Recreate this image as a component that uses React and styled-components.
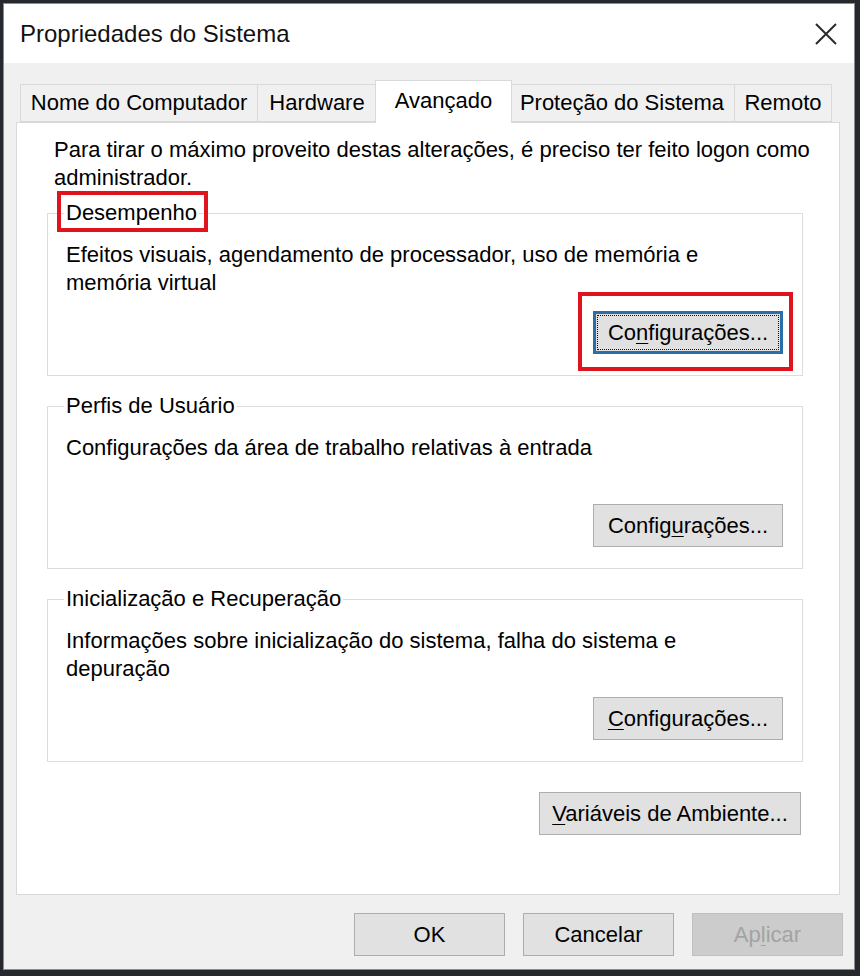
import React from 'react';
import styled, { createGlobalStyle } from 'styled-components';

const GlobalStyle = createGlobalStyle`
  html, body {
    margin: 0;
    padding: 0;
    background: #25282c;
  }
  body {
    font-family: 'Liberation Sans', Arial, sans-serif;
    color: #000;
  }
  #root {
    padding: 3px 5px 6px 3px;
  }
`;

const Window = styled.div`
  width: 852px;
  height: 967px;
  box-sizing: border-box;
  border: 1px solid #8c8c8c;
  background: #f0f0f0;
  display: flex;
  flex-direction: column;
`;

const TitleBar = styled.header`
  height: 59px;
  flex-shrink: 0;
  background: #fff;
  display: flex;
  align-items: center;
  justify-content: space-between;
  padding: 0 17px 0 16px;
`;

const Title = styled.h1`
  margin: 0;
  font-size: 24px;
  font-weight: normal;
  color: #111;
`;

const CloseButton = styled.button`
  border: 0;
  background: none;
  padding: 0;
  width: 22px;
  height: 22px;
  display: flex;
  cursor: pointer;
`;

const Body = styled.div`
  flex: 1;
  display: flex;
  flex-direction: column;
  padding: 17px 14px 13px 12px;
  min-height: 0;
`;

const TabStrip = styled.div`
  height: 42px;
  flex-shrink: 0;
  display: flex;
  align-items: flex-end;
  padding-left: 4px;
`;

const Tab = styled.div`
  box-sizing: border-box;
  width: ${p => p.$w}px;
  height: ${p => (p.$active ? 43 : 38)}px;
  margin: ${p => (p.$active ? '0 -2px -1px -2px' : '0 0 0 -1px')};
  padding-bottom: ${p => (p.$active ? 3 : 0)}px;
  border: 1px solid #d9d9d9;
  border-bottom: ${p => (p.$active ? '0' : '1px solid #d9d9d9')};
  background: ${p => (p.$active ? '#fff' : '#f0f0f0')};
  position: relative;
  z-index: ${p => (p.$active ? 2 : 1)};
  display: flex;
  align-items: center;
  justify-content: center;
  font-size: 22px;
  white-space: nowrap;

  &:first-child {
    margin-left: 0;
  }
`;

const Panel = styled.section`
  flex: 1;
  background: #fff;
  border: 1px solid #d9d9d9;
  padding: 13px 36px 0 30px;
  display: flex;
  flex-direction: column;
`;

const Intro = styled.p`
  margin: 0 0 7px 7px;
  font-size: 22px;
  line-height: 28px;
  white-space: nowrap;
`;

const Groups = styled.div`
  display: flex;
  flex-direction: column;
  gap: 16px;
`;

const Group = styled.fieldset`
  margin: 0;
  padding: 0;
  border: 1px solid #dcdcdc;
  min-width: 0;
`;

const Legend = styled.legend`
  margin-left: 16px;
  padding: 0 2px;
  font-size: 22px;
  line-height: 28px;
`;

const GroupBody = styled.div`
  box-sizing: border-box;
  height: 148px;
  display: flex;
  flex-direction: column;
  padding: 14px 19px 21px 18px;
`;

const Description = styled.p`
  margin: 0;
  font-size: 22px;
  line-height: 28px;
  white-space: nowrap;
`;

const Button = styled.button`
  box-sizing: border-box;
  width: ${p => p.$w || 151}px;
  height: 43px;
  padding: 0;
  font-family: 'Liberation Sans', Arial, sans-serif;
  font-size: 22px;
  color: ${p => (p.disabled ? '#a3a3a3' : '#000')};
  background: ${p => (p.disabled ? '#cccccc' : '#e1e1e1')};
  border: ${p => (p.$focused ? '3px solid #2a6eaa' : `1px solid ${p.disabled ? '#bfbfbf' : '#adadad'}`)};
  outline: ${p => (p.$focused ? '1px dotted #111' : 'none')};
  outline-offset: -5px;
  cursor: default;

  u {
    text-decoration-thickness: 1px;
    text-underline-offset: 3px;
  }
`;

const GroupButton = styled(Button)`
  margin-top: auto;
  align-self: flex-end;
`;

const EnvButton = styled(Button)`
  margin: 30px 2px 0 0;
  align-self: flex-end;
`;

const Marked = styled.span`
  position: relative;
  display: inline-block;
  align-self: ${p => p.$align || 'auto'};
  margin-top: ${p => (p.$push ? 'auto' : '0')};

  &::after {
    content: '';
    position: absolute;
    top: ${p => p.$t}px;
    right: ${p => p.$r}px;
    bottom: ${p => p.$b}px;
    left: ${p => p.$l}px;
    border: 4px solid #e0141c;
    pointer-events: none;
  }
`;

const Footer = styled.div`
  display: flex;
  justify-content: flex-end;
  gap: 18px;
  margin: 18px -3px 0 0;
`;

const CloseIcon = () => (
  <svg width="22" height="22" viewBox="0 0 22 22">
    <path d="M1 1 L21 21 M21 1 L1 21" stroke="#2b2b2b" strokeWidth="2" fill="none" />
  </svg>
);

const tabs = [
  { label: 'Nome do Computador', w: 238 },
  { label: 'Hardware', w: 120 },
  { label: 'Avançado', w: 137, active: true },
  { label: 'Proteção do Sistema', w: 226 },
  { label: 'Remoto', w: 98 },
];

export default function App() {
  return (
    <>
      <GlobalStyle />
      <Window>
        <TitleBar>
          <Title>Propriedades do Sistema</Title>
          <CloseButton aria-label="Fechar">
            <CloseIcon />
          </CloseButton>
        </TitleBar>

        <Body>
          <TabStrip>
            {tabs.map(t => (
              <Tab key={t.label} $w={t.w} $active={t.active}>
                {t.label}
              </Tab>
            ))}
          </TabStrip>

          <Panel>
            <Intro>
              Para tirar o máximo proveito destas alterações, é preciso ter feito logon como
              <br />
              administrador.
            </Intro>

            <Groups>
              <Group>
                <Legend>
                  <Marked $t={-8} $r={-11} $b={-5} $l={-9}>Desempenho</Marked>
                </Legend>
                <GroupBody>
                  <Description>
                    Efeitos visuais, agendamento de processador, uso de memória e
                    <br />
                    memória virtual
                  </Description>
                  <Marked $align="flex-end" $push $t={-19} $r={-10} $b={-17} $l={-15}>
                    <Button $w={190} $focused>
                      Co<u>n</u>figurações...
                    </Button>
                  </Marked>
                </GroupBody>
              </Group>

              <Group>
                <Legend>Perfis de Usuário</Legend>
                <GroupBody>
                  <Description>Configurações da área de trabalho relativas à entrada</Description>
                  <GroupButton $w={190}>
                    Config<u>u</u>rações...
                  </GroupButton>
                </GroupBody>
              </Group>

              <Group>
                <Legend>Inicialização e Recuperação</Legend>
                <GroupBody>
                  <Description>
                    Informações sobre inicialização do sistema, falha do sistema e
                    <br />
                    depuração
                  </Description>
                  <GroupButton $w={190}>
                    <u>C</u>onfigurações...
                  </GroupButton>
                </GroupBody>
              </Group>
            </Groups>

            <EnvButton $w={262}>
              <u>V</u>ariáveis de Ambiente...
            </EnvButton>
          </Panel>

          <Footer>
            <Button>OK</Button>
            <Button>Cancelar</Button>
            <Button disabled>
              Ap<u>l</u>icar
            </Button>
          </Footer>
        </Body>
      </Window>
    </>
  );
}
